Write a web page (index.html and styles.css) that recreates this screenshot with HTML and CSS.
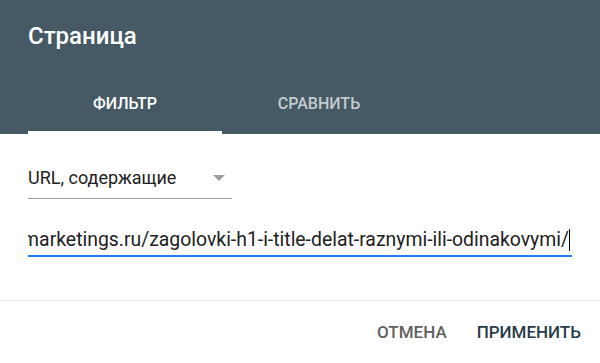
FILE: index.html
```html
<!DOCTYPE html>
<html lang="ru">
<head>
<meta charset="utf-8">
<link rel="stylesheet" href="styles.css">
</head>
<body>
<div class="dialog">
  <header class="head">
    <h1 class="title">Страница</h1>
    <nav class="tabs">
      <div class="tab active">ФИЛЬТР</div>
      <div class="tab">СРАВНИТЬ</div>
    </nav>
  </header>
  <main class="body">
    <div class="select">
      <span class="select-text">URL, содержащие</span>
      <span class="arrow"></span>
    </div>
    <div class="input">
      <div class="input-clip"><span class="input-text">marketings.ru/zagolovki-h1-i-title-delat-raznymi-ili-odinakovymi/</span><span class="caret"></span></div>
    </div>
  </main>
  <footer class="actions">
    <span class="btn cancel">ОТМЕНА</span>
    <span class="btn apply">ПРИМЕНИТЬ</span>
  </footer>
</div>
</body>
</html>
```
FILE: styles.css
```css
* { box-sizing: border-box; }
html, body { margin: 0; padding: 0; }
body {
  width: 600px;
  height: 363px;
  background: #fff;
  font-family: Roboto, "Liberation Sans", sans-serif;
  overflow: hidden;
}
.dialog { display: flex; flex-direction: column; height: 363px; }
.head {
  background: #455a64;
  height: 134px;
  padding: 0 28px;
  display: flex;
  flex-direction: column;
}
.title {
  margin: 0;
  padding-top: 20px;
  height: 78px;
  font-size: 24px;
  font-weight: 500;
  color: #fff;
  line-height: 32px;
}
.tabs { display: flex; height: 56px; }
.tab {
  width: 194px;
  text-align: center;
  font-size: 16px;
  font-weight: 500;
  color: rgba(255,255,255,0.7);
  line-height: 52px;
  border-bottom: 3px solid transparent;
  height: 56px;
}
.tab.active { color: #fff; border-bottom-color: #fff; }
.body { padding: 0 28px; height: 166px; }
.select {
  margin-top: 28px;
  width: 204px;
  height: 37px;
  border-bottom: 1px solid #9e9e9e;
  display: flex;
  align-items: center;
  justify-content: space-between;
  padding-right: 7px;
  padding-bottom: 5px;
}
.select-text { font-size: 18px; color: #212121; }
.arrow {
  width: 0; height: 0;
  border-left: 6.5px solid transparent;
  border-right: 6.5px solid transparent;
  border-top: 6.5px solid #9e9e9e;
}
.input {
  margin-top: 22px;
  width: 544px;
  height: 36px;
  border-bottom: 2px solid #2979ff;
}
.input-clip {
  overflow: hidden;
  white-space: nowrap;
  display: flex;
  justify-content: flex-end;
  align-items: center;
  height: 34px;
  padding-top: 3px;
}
.input-text { font-size: 19.4px; color: #212121; flex-shrink: 0; }
.caret { width: 1px; height: 22px; background: #000; flex-shrink: 0; margin-right: 2px; }
.actions {
  border-top: 1px solid #e6e6e6;
  height: 63px;
  display: flex;
  justify-content: flex-end;
  align-items: center;
  padding-right: 19px;
  gap: 30px;
}
.btn { font-size: 17px; font-weight: 500; }
.cancel { color: #616161; }
.apply { color: #263c4a; }
```
